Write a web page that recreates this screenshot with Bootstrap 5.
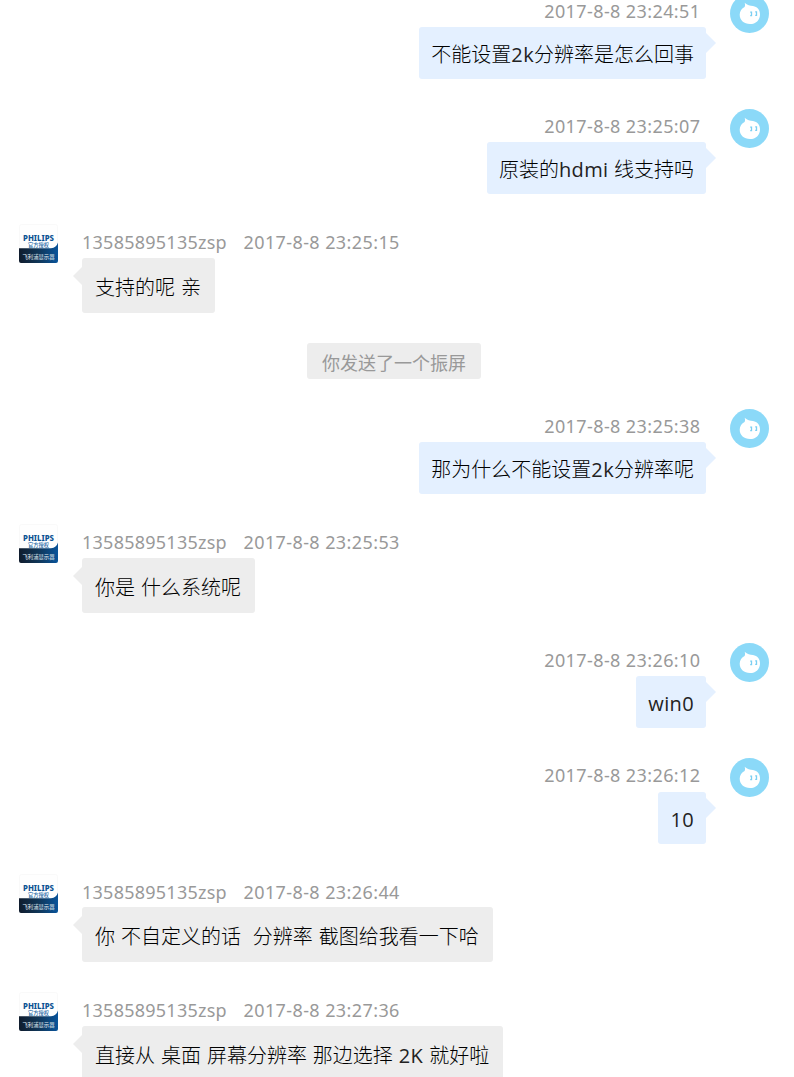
<!DOCTYPE html>
<html lang="zh-CN">
<head>
<meta charset="utf-8">
<meta name="viewport" content="width=device-width, initial-scale=1">
<title>聊天记录</title>
<link href="https://cdn.jsdelivr.net/npm/bootstrap@5.3.0/dist/css/bootstrap.min.css" rel="stylesheet">
<style>
body{background:#fff;font-family:"Noto Sans","Noto Sans CJK SC",sans-serif;color:#000}
.chat{height:1077px}
.chat-log{gap:30px;margin-top:-6.2px}
.msg{flex:none}
.msg-out{height:85.3px;padding-right:25px;gap:24px}
.msg-in{height:88.6px;padding-left:19px;gap:24px}
.avatar{width:39px;height:39px;flex:none;display:block}
.meta{height:33.2px;font-size:18px;line-height:35px;color:#999;white-space:pre}
.msg-in .meta{height:33.4px;line-height:37px}
.msg-out .meta{padding-right:5.5px}
.stamp{letter-spacing:.4px}
.who{letter-spacing:.25px;width:161.5px;display:inline-block}
.bubble{position:relative;font-size:20px;font-weight:300;border-radius:3px;white-space:pre;width:max-content}
.latin{font-family:"Open Sans","Noto Sans",sans-serif;font-weight:400;letter-spacing:.35px;color:#222}
.msg-out .bubble{background:#e4f0ff;height:52.1px;line-height:56px;padding:0 12px 0 12.1px}
.msg-in .bubble{background:#ededed;height:55.2px;line-height:60px;padding:0 13.9px 0 13px;word-spacing:.75px}
.bubble::after{content:"";position:absolute}
.msg-out .bubble::after{left:100%;top:6px;border:solid transparent;border-width:10.5px 0 10.5px 10.5px;border-left-color:#e4f0ff}
.msg-in .bubble::after{right:100%;top:9px;border:solid transparent;border-width:9px 9px 9px 0;border-right-color:#ededed}
.notice{width:174px;height:36.2px;margin-left:307px;line-height:40px;font-size:18px;color:#999;background:#ededed;border-radius:3px}
</style>
</head>
<body>
<svg width="0" height="0" class="position-absolute">
<defs>
<linearGradient id="navy" x1="0" x2="1" y1="0" y2="0"><stop offset="0" stop-color="#101c2d"/><stop offset=".5" stop-color="#103658"/><stop offset="1" stop-color="#08549b"/></linearGradient>
<symbol id="drop" viewBox="0 0 39 39">
<circle cx="19.5" cy="19.5" r="19.5" fill="#8bd9f8"/>
<path d="M14.6 8.7C17.4 11.2 20 11.5 23 12C27.4 12.8 30 16 30 20.4C30 26 25.8 30 20 30C14 30 9.7 26.3 9.7 20.8C9.7 17 11.8 14.6 14.6 13C15.3 11.3 15.2 10 14.6 8.7Z" fill="#fff"/>
<path d="M20.2 18.1h1.3v3.6h-1.3M25.2 17.8h1.3v3.6h-1.3" fill="none" stroke="#7bcff2" stroke-width="1.3"/>
</symbol>
<symbol id="brand" viewBox="0 0 39 39">
<rect x=".5" y=".5" width="38" height="38" rx="2" fill="#fefefe" stroke="#f9f9f9"/>
<path d="M0 24.3H32Q37.5 23.8 39 18.5V37Q39 39 37 39H2Q0 39 0 37Z" fill="url(#navy)"/>
<text x="4" y="16.6" font-family="Noto Sans" font-weight="800" font-size="8.2" fill="#0b5293" textLength="31" lengthAdjust="spacingAndGlyphs">PHILIPS</text>
<text x="9" y="23" font-family="Noto Sans CJK SC" font-weight="500" font-size="5.3" fill="#2668a6" textLength="21" lengthAdjust="spacingAndGlyphs">官方授权</text>
<text x="3.5" y="34.6" font-family="Noto Sans CJK SC" font-size="5.4" fill="#e5edf4" textLength="32" lengthAdjust="spacingAndGlyphs">飞利浦显示器</text>
</symbol>
</defs>
</svg>
<main class="chat overflow-hidden d-flow-root">
<div class="chat-log d-flex flex-column">
<div class="msg msg-out d-flex justify-content-end"><div class="d-flex flex-column align-items-end"><div class="meta"><span class="stamp">2017-8-8 23:24:51</span></div><div class="bubble">不能设置<span class="latin">2k</span>分辨率是怎么回事</div></div><svg class="avatar"><use href="#drop"/></svg></div>
<div class="msg msg-out d-flex justify-content-end"><div class="d-flex flex-column align-items-end"><div class="meta"><span class="stamp">2017-8-8 23:25:07</span></div><div class="bubble">原装的<span class="latin">hdmi </span>线支持吗</div></div><svg class="avatar"><use href="#drop"/></svg></div>
<div class="msg msg-in d-flex"><svg class="avatar"><use href="#brand"/></svg><div><div class="meta"><span class="who">13585895135zsp</span><span class="stamp">2017-8-8 23:25:15</span></div><div class="bubble">支持的呢 亲</div></div></div>
<div class="notice text-center msg">你发送了一个振屏</div>
<div class="msg msg-out d-flex justify-content-end"><div class="d-flex flex-column align-items-end"><div class="meta"><span class="stamp">2017-8-8 23:25:38</span></div><div class="bubble">那为什么不能设置<span class="latin">2k</span>分辨率呢</div></div><svg class="avatar"><use href="#drop"/></svg></div>
<div class="msg msg-in d-flex"><svg class="avatar"><use href="#brand"/></svg><div><div class="meta"><span class="who">13585895135zsp</span><span class="stamp">2017-8-8 23:25:53</span></div><div class="bubble">你是 什么系统呢</div></div></div>
<div class="msg msg-out d-flex justify-content-end"><div class="d-flex flex-column align-items-end"><div class="meta"><span class="stamp">2017-8-8 23:26:10</span></div><div class="bubble"><span class="latin">win0</span></div></div><svg class="avatar"><use href="#drop"/></svg></div>
<div class="msg msg-out d-flex justify-content-end"><div class="d-flex flex-column align-items-end"><div class="meta"><span class="stamp">2017-8-8 23:26:12</span></div><div class="bubble"><span class="latin">10</span></div></div><svg class="avatar"><use href="#drop"/></svg></div>
<div class="msg msg-in d-flex"><svg class="avatar"><use href="#brand"/></svg><div><div class="meta"><span class="who">13585895135zsp</span><span class="stamp">2017-8-8 23:26:44</span></div><div class="bubble">你 不自定义的话  分辨率 截图给我看一下哈</div></div></div>
<div class="msg msg-in d-flex"><svg class="avatar"><use href="#brand"/></svg><div><div class="meta"><span class="who">13585895135zsp</span><span class="stamp">2017-8-8 23:27:36</span></div><div class="bubble">直接从 桌面 屏幕分辨率 那边选择 <span class="latin">2K</span> 就好啦</div></div></div>
</div>
</main>
<script src="https://cdn.jsdelivr.net/npm/bootstrap@5.3.0/dist/js/bootstrap.bundle.min.js"></script>
</body>
</html>
